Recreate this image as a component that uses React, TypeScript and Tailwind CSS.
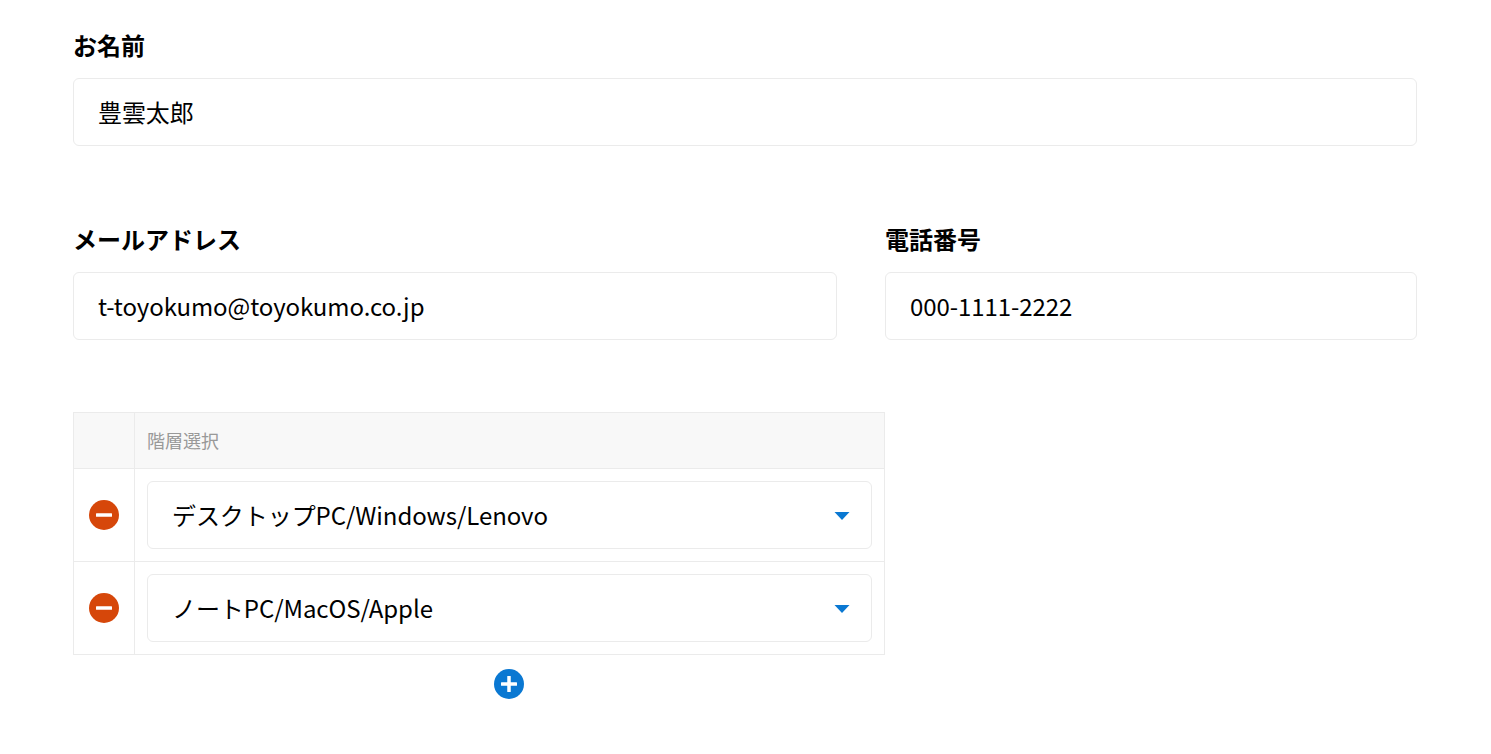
const font = { fontFamily: '"Noto Sans CJK JP", "Noto Sans", sans-serif' };

function Field({ label, value }: { label: string; value: string }) {
  return (
    <div className="flex flex-col">
      <label className="h-9 text-[24px] leading-[34px] font-bold text-black">{label}</label>
      <div className="mt-[14px] flex h-[68px] items-center rounded-md border border-[#ebebeb] bg-white px-6 text-[24px] tracking-[-0.07px] text-black">
        {value}
      </div>
    </div>
  );
}

function CircleIcon({ color, plus }: { color: string; plus?: boolean }) {
  return (
    <svg width="30" height="30" viewBox="0 0 30 30" className="block">
      <circle cx="15" cy="15" r="15" fill={color} />
      <rect x="7" y="13.25" width="16" height="3.5" rx="0.5" fill="#fff" />
      {plus && <rect x="13.25" y="7" width="3.5" height="16" rx="0.5" fill="#fff" />}
    </svg>
  );
}

function Row({ value }: { value: string }) {
  return (
    <div className="flex h-[93px] border-t border-[#ebebeb]">
      <div className="flex w-[61px] items-center justify-center border-r border-[#ebebeb]">
        <CircleIcon color="#d6470a" />
      </div>
      <div className="flex-1 p-3">
        <div className="flex h-[68px] items-center justify-between rounded-md border border-[#ebebeb] bg-white pl-6 pr-[21px] text-[24px] tracking-[-0.07px] text-black">
          <span>{value}</span>
          <svg width="16" height="8" viewBox="0 0 16 8" className="mt-[1px] block">
            <path d="M0.5 0H15.5L8 8Z" fill="#0a78d2" />
          </svg>
        </div>
      </div>
    </div>
  );
}

export default function App() {
  return (
    <div className="min-h-[754px] bg-white pt-[28px] pr-[74px] pl-[73px]" style={font}>
      <Field label="お名前" value="豊雲太郎" />
      <div className="mt-[76px] grid grid-cols-[764px_532px] gap-x-12">
        <Field label="メールアドレス" value="t-toyokumo@toyokumo.co.jp" />
        <Field label="電話番号" value="000-1111-2222" />
      </div>
      <div className="mt-[72px] w-[812px]">
        <div className="border-x border-b border-[#ebebeb]">
          <div className="flex h-[56px] border-t border-[#ebebeb] bg-[#f8f8f8]">
            <div className="w-[61px] border-r border-[#ebebeb]" />
            <div className="flex flex-1 items-center px-3 text-[18px] text-[#999999]">階層選択</div>
          </div>
          <Row value="デスクトップPC/Windows/Lenovo" />
          <Row value="ノートPC/MacOS/Apple" />
        </div>
        <div className="mt-[14px] flex pl-[60px]">
          <div className="flex flex-1 justify-center">
            <CircleIcon color="#0a78d2" plus />
          </div>
        </div>
      </div>
    </div>
  );
}
